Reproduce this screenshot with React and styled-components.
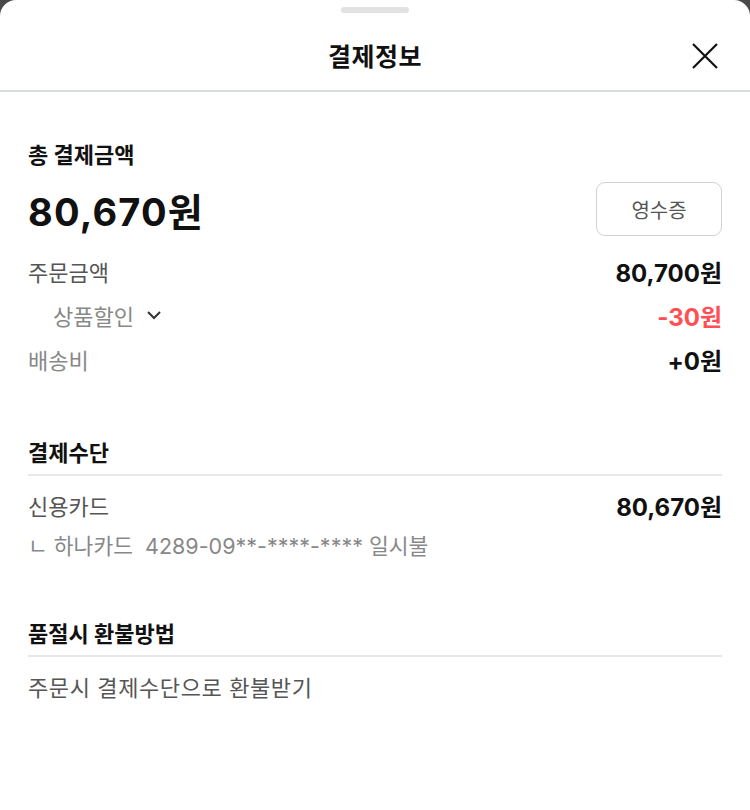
import styled, { createGlobalStyle } from "styled-components";

const GlobalStyle = createGlobalStyle`
  html, body {
    margin: 0;
    padding: 0;
    background: #4a4a4a;
  }
  body {
    font-family: Inter, "Noto Sans CJK KR", sans-serif;
    color: #111;
  }
`;

const Sheet = styled.div`
  background: #fff;
  min-height: 810px;
  border-radius: 16px 16px 0 0;
  overflow: hidden;
`;

const HandleBar = styled.div`
  height: 20px;
  display: flex;
  justify-content: center;
  padding-top: 7px;
  box-sizing: border-box;
`;

const Handle = styled.div`
  width: 68px;
  height: 6px;
  border-radius: 3px;
  background: #e2e2e2;
`;

const Header = styled.header`
  position: relative;
  height: 70px;
  display: flex;
  align-items: center;
  justify-content: center;
  border-bottom: 2px solid #d8dbdd;
`;

const Title = styled.h1`
  margin: 0;
  font-size: 25px;
  font-weight: 700;
  letter-spacing: 0.5px;
`;

const CloseButton = styled.button`
  position: absolute;
  right: 30px;
  top: 21px;
  width: 30px;
  height: 30px;
  padding: 0;
  border: 0;
  background: none;
  display: flex;
  align-items: center;
  justify-content: center;
`;

const Content = styled.main`
  padding: 0 28px;
`;

const SectionTitle = styled.h2`
  margin: ${(p) => p.$top}px 0 0;
  font-size: 22px;
  line-height: 26px;
  font-weight: 700;
  padding-bottom: ${(p) => (p.$line ? "8px" : "0")};
  border-bottom: ${(p) => (p.$line ? "2px solid #e8e8e8" : "none")};
`;

const TotalRow = styled.div`
  margin-top: 14px;
  height: 54px;
  display: flex;
  align-items: center;
  justify-content: space-between;
`;

const TotalAmount = styled.div`
  font-size: 38px;
  font-weight: 700;
  letter-spacing: 1.2px;
`;

const ReceiptButton = styled.button`
  width: 126px;
  height: 54px;
  border: 1.5px solid #d2d2d2;
  border-radius: 9px;
  background: #fff;
  font-family: inherit;
  font-size: 20px;
  color: #555;
`;

const Rows = styled.div`
  margin-top: 13px;
`;

const Row = styled.div`
  height: 44px;
  display: flex;
  align-items: center;
  justify-content: space-between;
`;

const Label = styled.span`
  display: flex;
  align-items: center;
  gap: 12px;
  font-size: 22px;
  color: ${(p) => p.$color || "#555"};
  padding-left: ${(p) => (p.$indent ? "25px" : "0")};
`;

const Value = styled.span`
  font-size: 24px;
  font-weight: 700;
  color: ${(p) => p.$color || "#111"};
`;

const PayRow = styled.div`
  margin-top: 15px;
  height: 28px;
  display: flex;
  align-items: center;
  justify-content: space-between;
`;

const Detail = styled.div`
  margin-top: 11px;
  height: 28px;
  display: flex;
  align-items: center;
  font-size: 21.5px;
  color: #888;
  white-space: pre;
`;

const Plain = styled.div`
  margin-top: 17px;
  font-size: 22px;
  line-height: 28px;
  letter-spacing: 0.6px;
  color: #555;
`;

const App = () => {
  return (
    <>
      <GlobalStyle />
      <Sheet>
        <HandleBar>
          <Handle />
        </HandleBar>
        <Header>
          <Title>결제정보</Title>
          <CloseButton aria-label="닫기">
            <svg width="28" height="28" viewBox="0 0 28 28">
              <path d="M2 2L26 26M26 2L2 26" stroke="#111" strokeWidth="2.2" />
            </svg>
          </CloseButton>
        </Header>

        <Content>
          <SectionTitle $top={50}>총 결제금액</SectionTitle>
          <TotalRow>
            <TotalAmount>80,670원</TotalAmount>
            <ReceiptButton>영수증</ReceiptButton>
          </TotalRow>

          <Rows>
            <Row>
              <Label $color="#555">주문금액</Label>
              <Value>80,700원</Value>
            </Row>
            <Row>
              <Label $color="#888" $indent>
                상품할인
                <svg width="16" height="10" viewBox="0 0 16 10">
                  <path d="M2 2L8 8L14 2" stroke="#333" strokeWidth="2" fill="none" />
                </svg>
              </Label>
              <Value $color="#ff4f55">-30원</Value>
            </Row>
            <Row>
              <Label $color="#888">배송비</Label>
              <Value>+0원</Value>
            </Row>
          </Rows>

          <SectionTitle $top={59} $line>
            결제수단
          </SectionTitle>
          <PayRow>
            <Label $color="#555">신용카드</Label>
            <Value>80,670원</Value>
          </PayRow>
          <Detail>ㄴ 하나카드  4289-09**-****-**** 일시불</Detail>

          <SectionTitle $top={63} $line>
            품절시 환불방법
          </SectionTitle>
          <Plain>주문시 결제수단으로 환불받기</Plain>
        </Content>
      </Sheet>
    </>
  );
};

export default App;
